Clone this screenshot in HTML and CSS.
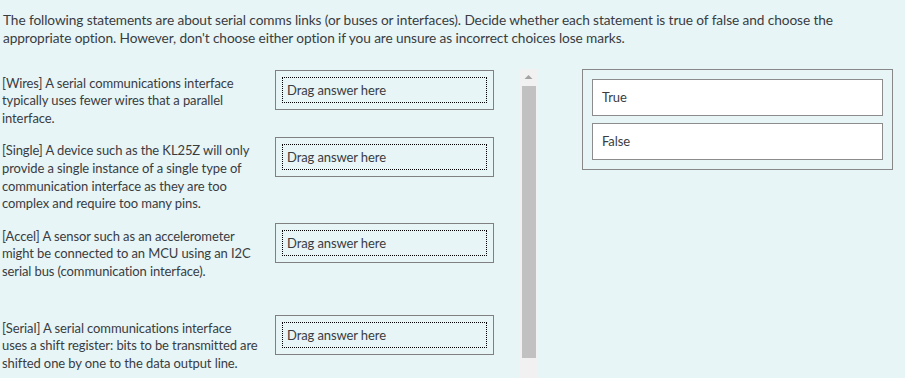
FILE: index.html
```html
<!DOCTYPE html>
<html lang="en">
<head>
<meta charset="utf-8">
<title>Drag and drop question</title>
<link rel="stylesheet" href="styles.css">
</head>
<body>
<p class="intro">The following statements are about serial comms links (or buses or interfaces). Decide whether each statement is true of false and choose the appropriate option. However, don't choose either option if you are unsure as incorrect choices lose marks.</p>
<div class="main">
  <div class="qwrap">
    <div class="questions">
      <div class="row">
        <div class="stmt">[Wires] A serial communications interface typically uses fewer wires that a parallel interface.</div>
        <div class="drop"><div class="drop-inner">Drag answer here</div></div>
      </div>
      <div class="row">
        <div class="stmt">[Single] A device such as the KL25Z will only provide a single instance of a single type of communication interface as they are too complex and require too many pins.</div>
        <div class="drop"><div class="drop-inner">Drag answer here</div></div>
      </div>
      <div class="row row-tall">
        <div class="stmt">[Accel] A sensor such as an accelerometer might be connected to an MCU using an I2C serial bus (communication interface).</div>
        <div class="drop"><div class="drop-inner">Drag answer here</div></div>
      </div>
      <div class="row">
        <div class="stmt">[Serial] A serial communications interface uses&nbsp;a shift register: bits to be transmitted are shifted one by one to the data output line.</div>
        <div class="drop"><div class="drop-inner">Drag answer here</div></div>
      </div>
    </div>
    <div class="scrollbar">
      <div class="sb-button">
        <svg width="17" height="17" viewBox="0 0 17 17"><path d="M4.5 10 L8.5 6 L12.5 10 Z" fill="#a3a3a3"/></svg>
      </div>
      <div class="sb-thumb"></div>
    </div>
  </div>
  <div class="options">
    <div class="option">True</div>
    <div class="option">False</div>
  </div>
</div>
</body>
</html>
```
FILE: styles.css
```css
html {
  overflow: hidden;
}
body {
  margin: 0;
  padding: 0 0 0 2px;
  background: #e7f5f7;
  color: #3a3c3f;
  font-family: "Lato", "Open Sans", sans-serif;
  font-size: 13px;
  letter-spacing: -0.1px;
}
.intro {
  margin: 11px 0 21px 1px;
  font-size: 13.7px;
  line-height: 18.3px;
  width: 885px;
}
.main {
  display: flex;
  align-items: flex-start;
  height: 309px;
}
.qwrap {
  display: flex;
  height: 100%;
}
.questions {
  width: 518px;
  height: 100%;
  overflow: hidden;
  padding-top: 1px;
  box-sizing: border-box;
}
.scrollbar {
  width: 17px;
  height: 100%;
  background: #f1f1f1;
  display: flex;
  flex-direction: column;
}
.sb-button {
  height: 17px;
  flex: none;
}
.sb-button svg {
  display: block;
}
.sb-thumb {
  height: 272px;
  margin: 0 1px 0 2px;
  background: #c1c1c1;
}
.row {
  display: flex;
  align-items: flex-start;
  gap: 14px;
  margin-bottom: 10px;
}
.row-tall {
  margin-bottom: 34px;
}
.stmt {
  width: 259px;
  flex: none;
  padding-top: 5px;
  line-height: 17.6px;
}
.drop {
  width: 219px;
  height: 40px;
  box-sizing: border-box;
  border: 1px solid #808080;
  padding: 6px;
}
.drop-inner {
  height: 100%;
  box-sizing: border-box;
  border: 1px dotted #000;
  padding-left: 4px;
  display: flex;
  align-items: center;
}
.options {
  margin-left: 45px;
  width: 311px;
  box-sizing: border-box;
  border: 1px solid #888;
  padding: 9px;
  display: flex;
  flex-direction: column;
  gap: 7px;
}
.option {
  height: 37px;
  box-sizing: border-box;
  background: #fff;
  border: 1px solid #8c8c8c;
  padding-left: 9px;
  display: flex;
  align-items: center;
}
```
